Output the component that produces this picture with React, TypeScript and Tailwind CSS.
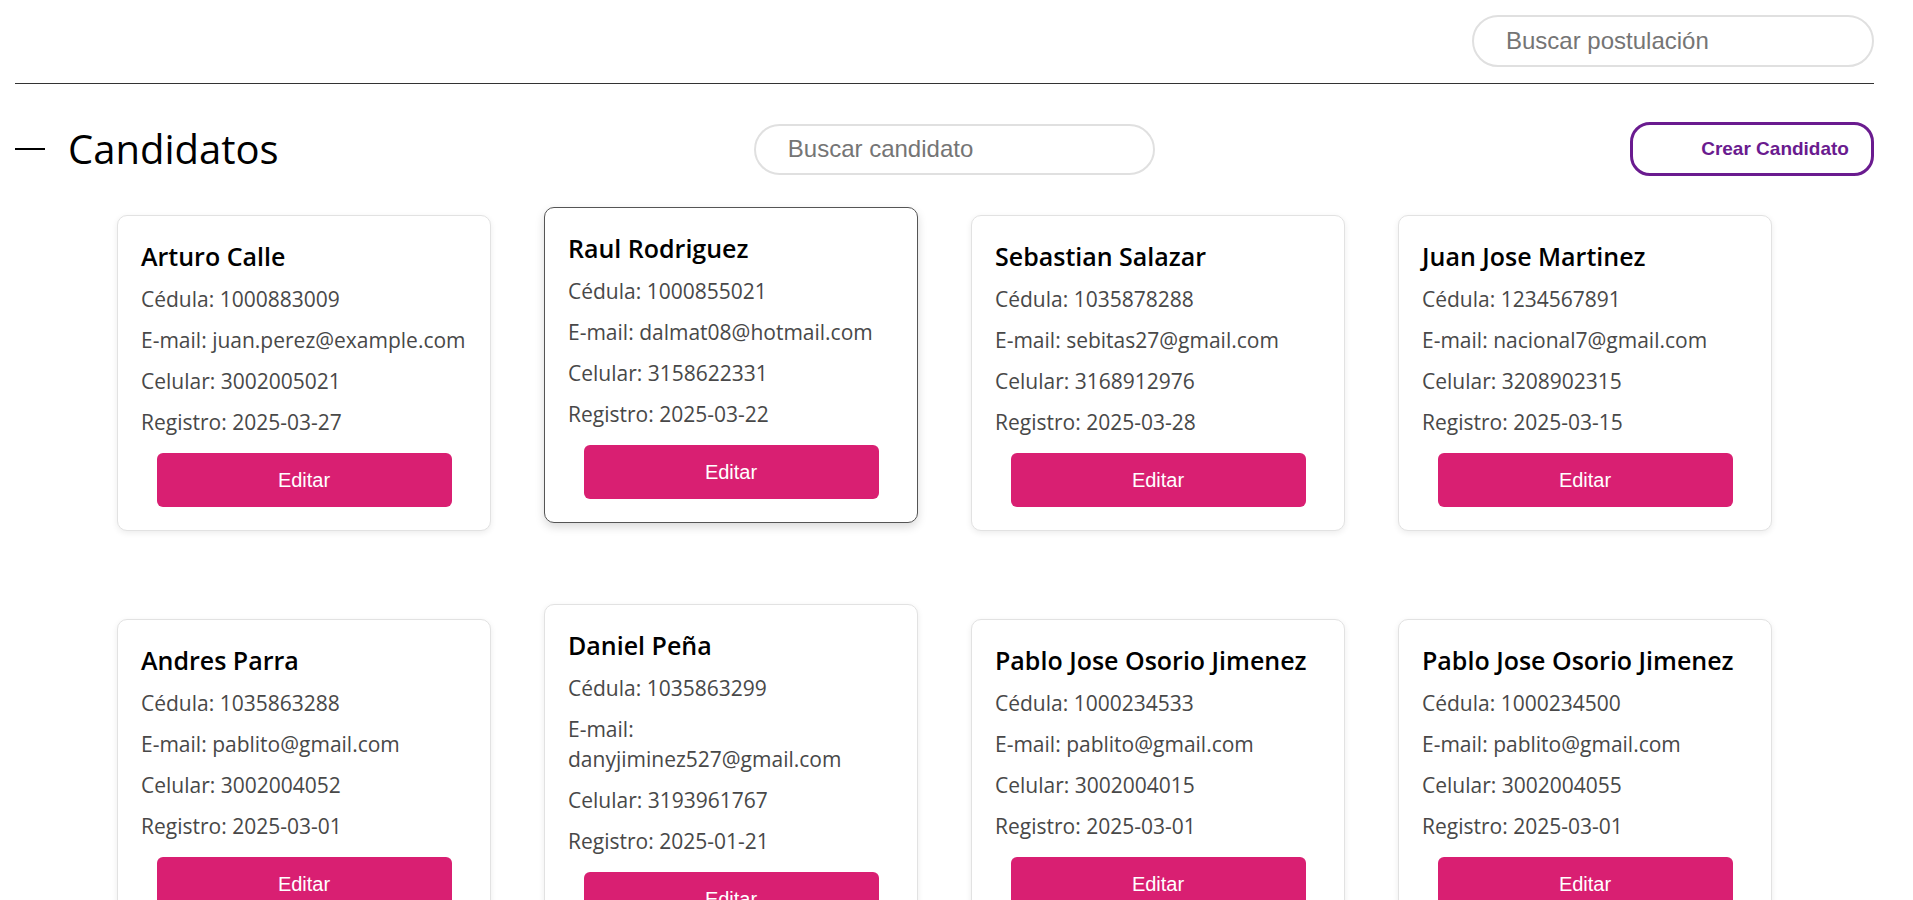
import { useState } from 'react';

interface Candidate {
  id: string;
  name: string;
  cedula: string;
  email: string;
  phone: string;
  createdAt: string;
}

const candidates: Candidate[] = [
  { id: '1', name: 'Arturo Calle', cedula: '1000883009', email: 'juan.perez@example.com', phone: '3002005021', createdAt: '2025-03-27' },
  { id: '2', name: 'Raul Rodriguez', cedula: '1000855021', email: 'dalmat08@hotmail.com', phone: '3158622331', createdAt: '2025-03-22' },
  { id: '3', name: 'Sebastian Salazar', cedula: '1035878288', email: 'sebitas27@gmail.com', phone: '3168912976', createdAt: '2025-03-28' },
  { id: '4', name: 'Juan Jose Martinez', cedula: '1234567891', email: 'nacional7@gmail.com', phone: '3208902315', createdAt: '2025-03-15' },
  { id: '5', name: 'Andres Parra', cedula: '1035863288', email: 'pablito@gmail.com', phone: '3002004052', createdAt: '2025-03-01' },
  { id: '6', name: 'Daniel Peña', cedula: '1035863299', email: 'danyjiminez527@gmail.com', phone: '3193961767', createdAt: '2025-01-21' },
  { id: '7', name: 'Pablo Jose Osorio Jimenez', cedula: '1000234533', email: 'pablito@gmail.com', phone: '3002004015', createdAt: '2025-03-01' },
  { id: '8', name: 'Pablo Jose Osorio Jimenez', cedula: '1000234500', email: 'pablito@gmail.com', phone: '3002004055', createdAt: '2025-03-01' },
];

function CandidateCard({ candidate, hovered }: { candidate: Candidate; hovered: boolean }) {
  return (
    <div
      className={`w-[374px] bg-white rounded-[10px] border px-[23px] pt-[22px] pb-[23px] font-['Open_Sans',sans-serif] ${
        hovered
          ? 'border-[#555] -translate-y-2 shadow-[0_4px_10px_rgba(0,0,0,0.15)]'
          : 'border-[#e2e2e2] shadow-[0_2px_6px_rgba(0,0,0,0.08)]'
      }`}
    >
      <h3 className="text-[25px] leading-[36px] font-semibold text-black mb-[10px]">{candidate.name}</h3>
      <div className="flex flex-col gap-[11px] text-[21px] leading-[30px] text-[#484848]">
        <p>Cédula: {candidate.cedula}</p>
        <p>E-mail: {candidate.email}</p>
        <p>Celular: {candidate.phone}</p>
        <p>Registro: {candidate.createdAt}</p>
      </div>
      <button className="mt-[16px] mx-auto block w-[295px] h-[54px] rounded-[6px] bg-[#d91f72] text-white text-[20px] font-['Liberation_Sans',Arial,sans-serif]">
        Editar
      </button>
    </div>
  );
}

export default function App() {
  const [search, setSearch] = useState('');
  const [postulacion, setPostulacion] = useState('');

  const filtered = candidates.filter(c => c.name.toLowerCase().includes(search.toLowerCase()));

  return (
    <div className="min-h-screen bg-white">
      <div className="w-[1859px] ml-[15px] pb-[40px]">
        <div className="flex justify-end pt-[15px] pb-[16px] border-b border-[#333]">
          <input
            value={postulacion}
            onChange={e => setPostulacion(e.target.value)}
            placeholder="Buscar postulación"
            className="w-[402px] h-[52px] rounded-full border-2 border-[#e0e0e0] pl-[32px] text-[24px] font-['Liberation_Sans',Arial,sans-serif] placeholder:text-[#757575] outline-none"
          />
        </div>

        <div className="mt-[38px] h-[54px] flex items-center justify-between">
          <div className="flex items-center gap-[23px]">
            <span className="block w-[30px] h-[2px] bg-black" />
            <h1 className="text-[40px] font-medium text-black font-['Open_Sans',sans-serif] leading-none">Candidatos</h1>
          </div>
          <input
            value={search}
            onChange={e => setSearch(e.target.value)}
            placeholder="Buscar candidato"
            className="w-[401px] h-[51px] rounded-full border-2 border-[#e0e0e0] pl-[32px] text-[24px] font-['Liberation_Sans',Arial,sans-serif] placeholder:text-[#757575] outline-none"
          />
          <button className="w-[244px] h-[54px] rounded-[20px] border-[3px] border-[#6a1b8f] flex items-center justify-end pr-[22px] text-[19px] font-bold text-[#6a1b8f] font-['Liberation_Sans',Arial,sans-serif]">
            Crear Candidato
          </button>
        </div>

        <div className="mt-[39px] flex flex-wrap justify-center items-center gap-x-[53px] gap-y-[73px]">
          {filtered.map(c => (
            <CandidateCard key={c.id} candidate={c} hovered={c.id === '2'} />
          ))}
        </div>
      </div>
    </div>
  );
}
